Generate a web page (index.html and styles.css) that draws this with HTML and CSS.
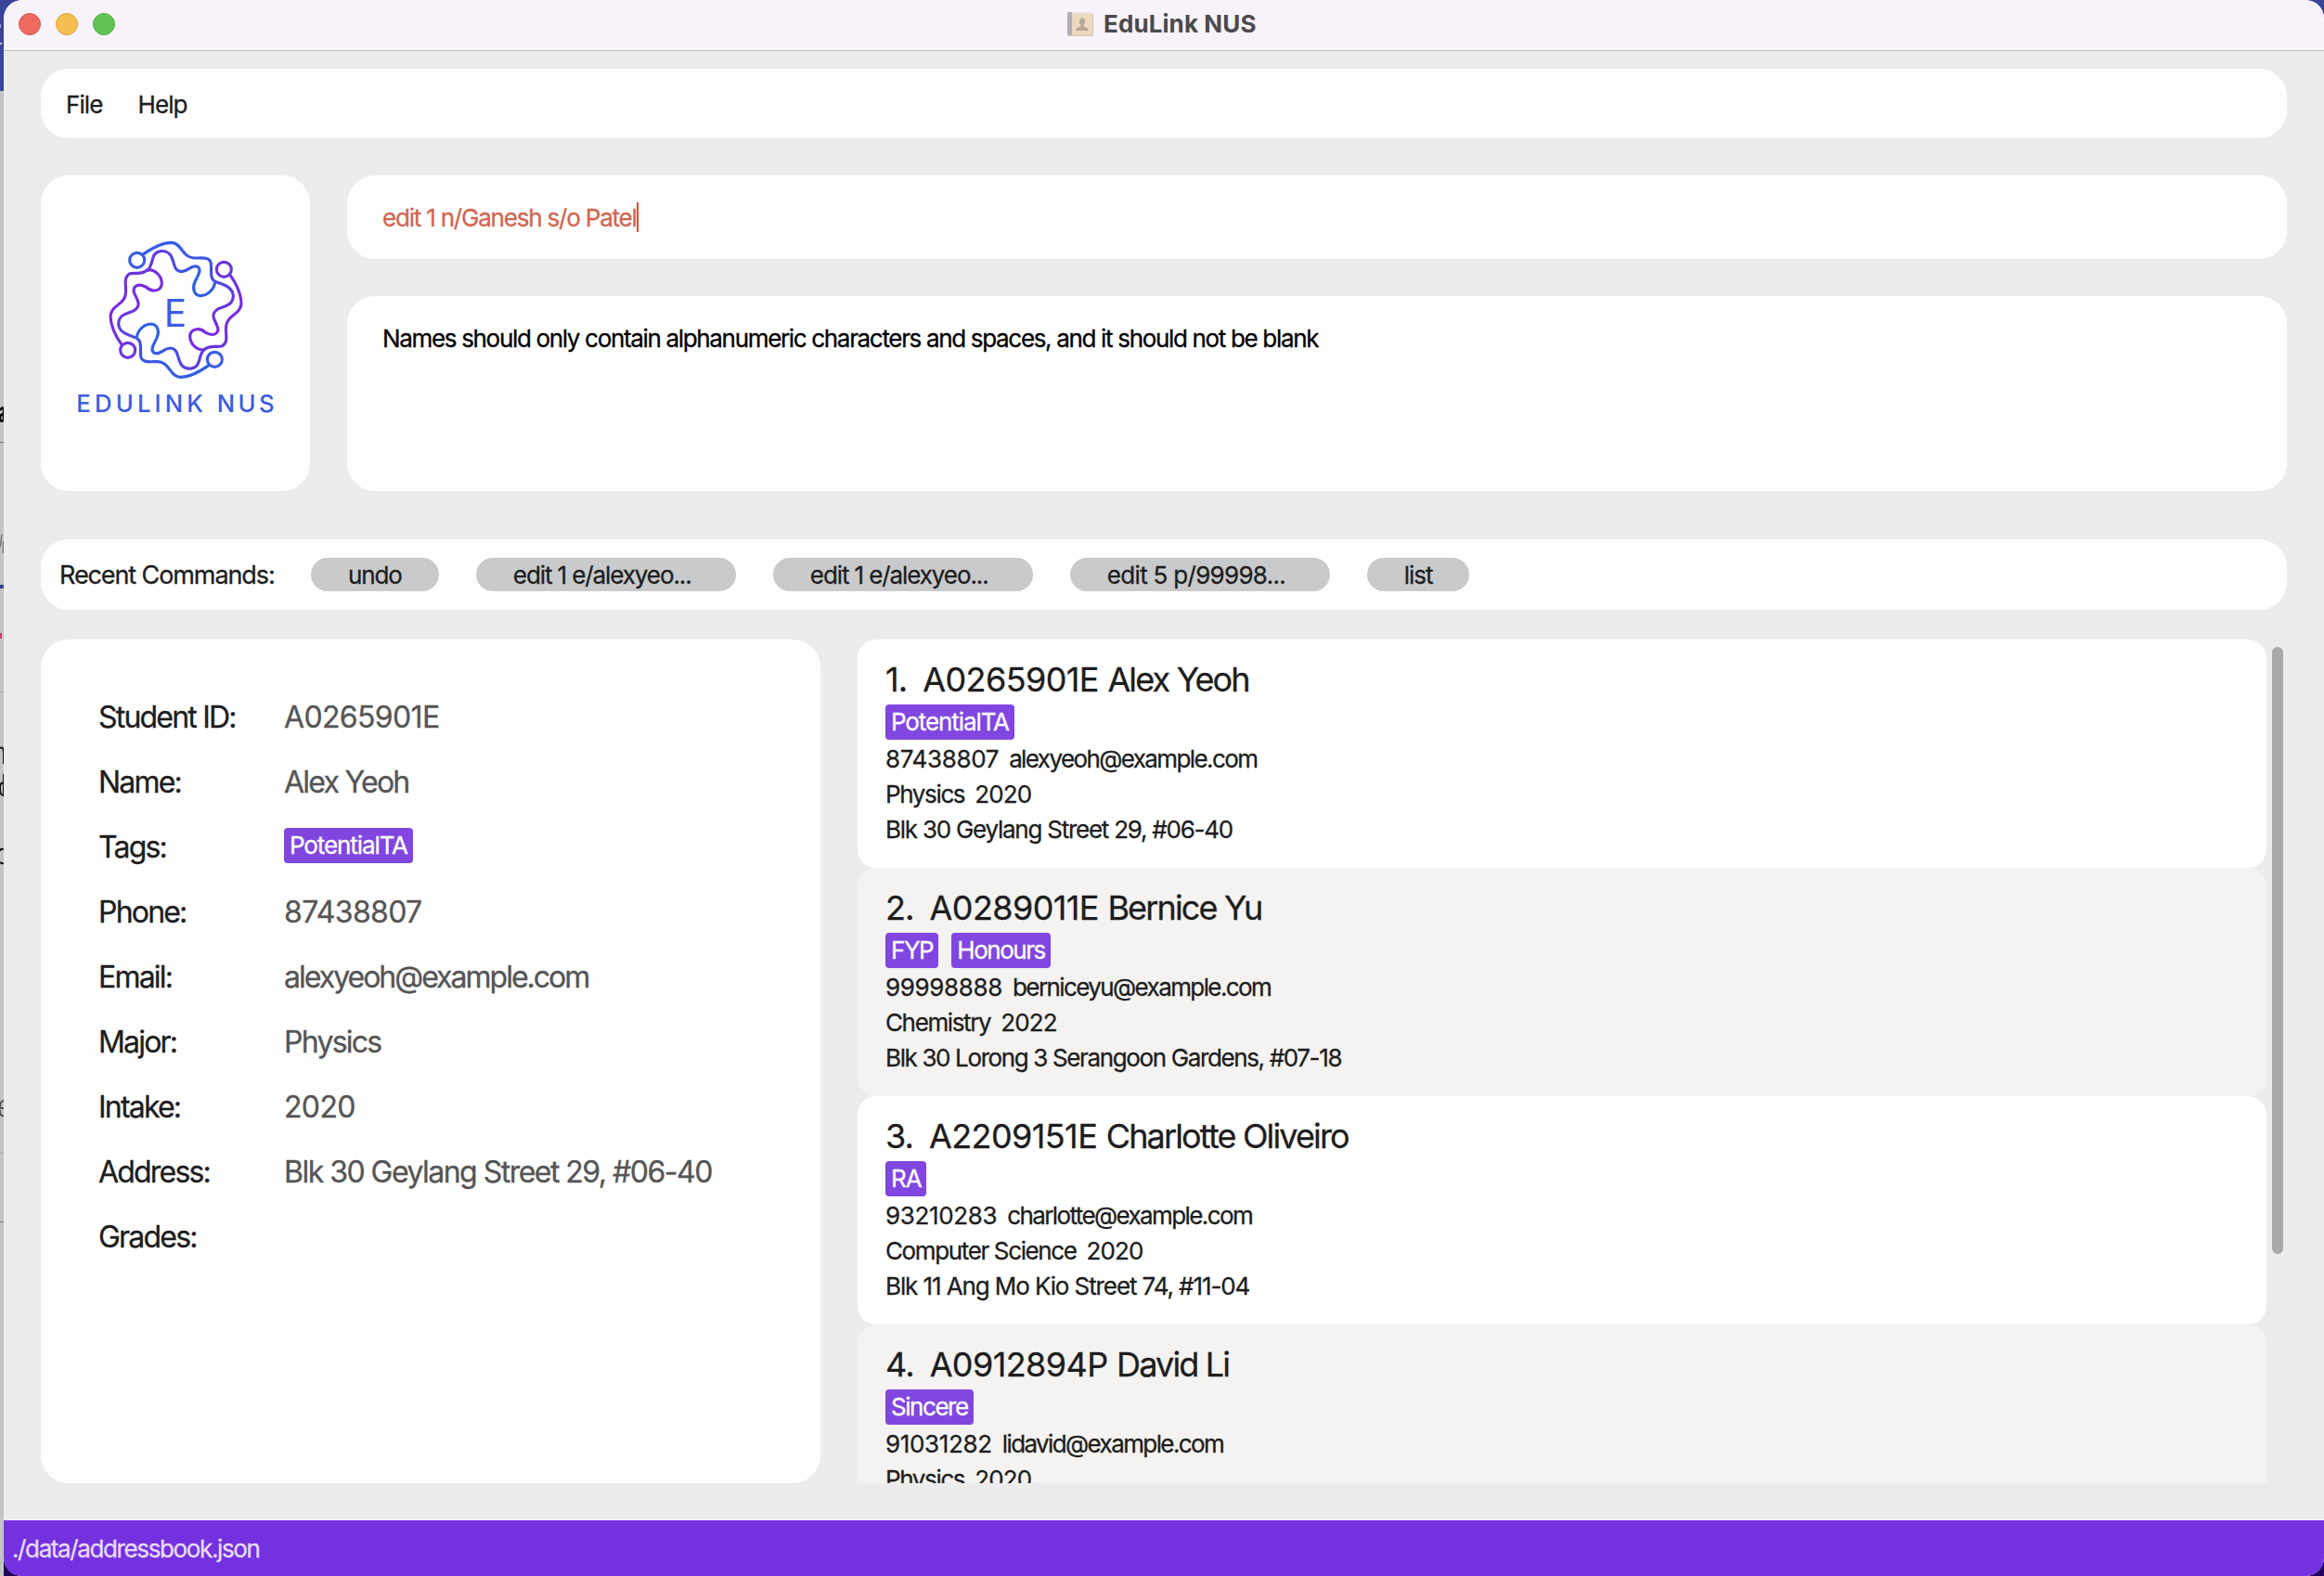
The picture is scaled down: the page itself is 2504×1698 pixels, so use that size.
FILE: index.html
```html
<!DOCTYPE html>
<html lang="en">
<head>
<meta charset="utf-8">
<title>EduLink NUS</title>
<link rel="stylesheet" href="styles.css">
</head>
<body>
<svg class="desktop" width="4" height="1698" viewBox="0 0 4 1698" aria-hidden="true">
  <rect width="4" height="1698" fill="#c4c4c4"/>
  <rect width="4" height="98" fill="#3a4499"/>
  <path d="M0 46h2v2h-2zM0 25l1 3l-1 3" fill="#c8cce8"/>
  <path d="M0 442Q4 436 4 444V454M4 446Q0 446 0 451Q1 456 4 452" fill="none" stroke="#000" stroke-width="2.5"/>
  <path d="M0 476.5h4M0 1316.5h4" stroke="#777"/>
  <path d="M0 745.5h4M0 1242.5h4" stroke="#aaa"/>
  <path d="M0 590l2-14M3.5 583v13" stroke="#777" stroke-width="1.5"/>
  <rect y="630" width="4" height="4" fill="#35408f"/>
  <rect y="682" width="2" height="6" fill="#c9416f"/>
  <path d="M0 806Q4 804 4 811V823M4 834V858M4 844Q0 842 0 850Q0 857 4 857M4 915Q0 914 0 917M0 929Q2 931 4 930" fill="none" stroke="#111" stroke-width="2"/>
  <path d="M4 1186Q0 1186 0 1194H4M0 1196Q0 1203 4 1202" fill="none" stroke="#555" stroke-width="2"/>
</svg>
<div class="window">
  <header class="titlebar">
    <div class="lights"><i class="light red"></i><i class="light amber"></i><i class="light green"></i></div>
    <svg class="book" width="28" height="28" viewBox="0 0 28 28" aria-hidden="true">
      <rect x="1" y="1" width="26" height="25.5" rx="1.5" fill="#ecd9bf"/>
      <rect x="5" y="1" width="22" height="2.5" fill="#ebe4dc"/>
      <rect x="0" y="1" width="5" height="25.5" rx="1" fill="#b5adb2"/>
      <path d="M.5 26.3H27.5V3" fill="none" stroke="#d3c3b0"/>
      <path d="M16 7.500c2 0 3 1.500 3 3.500c0 1.800-.8 3-1.500 4v1.500c1.500.8 5.500 1.300 5.500 4.500h-14c0-3.200 4-3.700 5.500-4.500v-1.500c-.7-1-1.500-2.200-1.500-4c0-2 1-3.500 3-3.500z" fill="#b3a798"/>
    </svg>
    <h1 class="title">EduLink NUS</h1>
  </header>
  <main class="content">
    <nav class="panel menu"><span>File</span><span>Help</span></nav>
    <section class="top">
      <div class="panel logo">
        <svg width="260" height="240" viewBox="0 0 780 720" role="img" aria-label="EduLink NUS">
          <defs>
            <linearGradient id="ga" gradientUnits="userSpaceOnUse" x1="380" y1="110" x2="480" y2="420"><stop offset="0" stop-color="#345de2"/><stop offset=".35" stop-color="#4450df"/><stop offset=".8" stop-color="#752fdf"/><stop offset="1" stop-color="#7c2be0"/></linearGradient>
            <linearGradient id="gb" gradientUnits="userSpaceOnUse" x1="300" y1="160" x2="450" y2="230"><stop offset="0" stop-color="#6538dd"/><stop offset="1" stop-color="#2e61e4"/></linearGradient>
            <linearGradient id="gc" gradientUnits="userSpaceOnUse" x1="560" y1="180" x2="540" y2="440"><stop offset="0" stop-color="#6638dd"/><stop offset=".4" stop-color="#7c2be0"/><stop offset="1" stop-color="#6a35dd"/></linearGradient>
            <g id="half" fill="none" stroke-width="9.500" stroke-linecap="round" stroke-linejoin="round">
              <circle cx="263" cy="151" r="24" stroke="#3a5be1"/>
              <circle cx="544" cy="181" r="24" stroke="#6a36dd"/>
              <path stroke="url(#ga)" d="M281 133C308 114 342 94 375 94C407 95 408 141 446 144C470 145 499 138 502 162C504 190 498 210 515 220C540 230 572 236 574 266C573 300 542 299 524 309C498 326 514 345 521 361C532 384 516 400 486 386C464 365 434 373 434 399C436 424 456 441 478 441"/>
              <path stroke="url(#gb)" d="M515 222C512 246 491 265 469 266C446 265 442 241 449 224C455 206 475 184 459 172C437 164 431 187 406 188C377 185 386 153 370 133C355 117 323 116 315 142C310 157 309 172 297 184"/>
              <path stroke="url(#gc)" d="M563 198C582 224 599 260 600 291C597 327 559 326 552 358C545 384 562 412 539 428C521 434 496 423 480 441"/>
            </g>
          </defs>
          <use href="#half"/>
          <use href="#half" transform="rotate(180 388.500 311.500)"/>
          <text class="mark" x="350" y="366" font-size="121">E</text>
          <text class="mark word" x="67" y="643" font-size="77" textLength="410">EDULINK</text>
          <text class="mark word" x="521" y="643" font-size="77" textLength="186">NUS</text>
        </svg>
      </div>
      <div class="io">
        <div class="panel command"><span class="typed">edit 1 n/Ganesh s/o Patel</span><i class="caret"></i></div>
        <div class="panel result">Names should only contain alphanumeric characters and spaces, and it should not be blank</div>
      </div>
    </section>
    <section class="panel recent">
      <span class="recent-label">Recent Commands:</span>
      <span class="pill">undo</span>
      <span class="pill long">edit 1 e/alexyeo...</span>
      <span class="pill long">edit 1 e/alexyeo...</span>
      <span class="pill long digits">edit 5 p/99998...</span>
      <span class="pill">list</span>
    </section>
    <section class="bottom">
      <dl class="panel detail">
        <dt>Student ID:</dt><dd class="digits">A0265901E</dd>
        <dt>Name:</dt><dd>Alex Yeoh</dd>
        <dt>Tags:</dt><dd><span class="tag wide">PotentialTA</span></dd>
        <dt>Phone:</dt><dd class="digits">87438807</dd>
        <dt>Email:</dt><dd class="email">alexyeoh@example.com</dd>
        <dt>Major:</dt><dd>Physics</dd>
        <dt>Intake:</dt><dd class="digits">2020</dd>
        <dt>Address:</dt><dd class="address">Blk 30 Geylang Street 29, #06-40</dd>
        <dt>Grades:</dt><dd></dd>
      </dl>
      <div class="list">
        <article class="card">
          <h2><span class="index">1.</span><span><span class="id">A0265901E </span>Alex Yeoh</span></h2>
          <div class="tags"><span class="tag wide">PotentialTA</span></div>
          <p><span class="digits">87438807</span><span class="email">alexyeoh@example.com</span></p>
          <p><span>Physics</span><span class="year">2020</span></p>
          <p class="address">Blk 30 Geylang Street 29, #06-40</p>
        </article>
        <article class="card alt">
          <h2><span class="index">2.</span><span><span class="id">A0289011E </span>Bernice Yu</span></h2>
          <div class="tags"><span class="tag">FYP</span><span class="tag">Honours</span></div>
          <p><span class="digits">99998888</span><span class="email">berniceyu@example.com</span></p>
          <p><span>Chemistry</span><span class="year">2022</span></p>
          <p>Blk 30 Lorong 3 Serangoon Gardens, #07-18</p>
        </article>
        <article class="card">
          <h2><span class="index">3.</span><span><span class="id">A2209151E </span>Charlotte Oliveiro</span></h2>
          <div class="tags"><span class="tag wide">RA</span></div>
          <p><span class="digits">93210283</span><span class="email">charlotte@example.com</span></p>
          <p><span>Computer Science</span><span class="year">2020</span></p>
          <p class="address wide">Blk 11 Ang Mo Kio Street 74, #11-04</p>
        </article>
        <article class="card alt">
          <h2><span class="index">4.</span><span><span class="id">A0912894P </span>David Li</span></h2>
          <div class="tags"><span class="tag">Sincere</span></div>
          <p><span class="digits">91031282</span><span class="email">lidavid@example.com</span></p>
          <p><span>Physics</span><span class="year">2020</span></p>
        </article>
      </div>
      <div class="scroll"><div class="thumb"></div></div>
    </section>
  </main>
  <footer class="status">./data/addressbook.json</footer>
</div>
</body>
</html>
```
FILE: styles.css
```css
* { box-sizing: border-box; margin: 0; padding: 0; }
body {
  display: flex;
  width: 2504px;
  height: 1698px;
  overflow: hidden;
  background: linear-gradient(#3a4499 0 98px, #c4c4c4 98px 1600px, #22005f 1600px);
  font-family: Inter, "Liberation Sans", sans-serif;
  font-size: 26px;
  letter-spacing: -0.9px;
  -webkit-text-stroke: 0.3px;
  color: #1d1d1d;
  white-space: nowrap;
}
.desktop { flex: none; display: block; }
.window {
  flex: 1;
  display: flex;
  flex-direction: column;
  background: #ececec;
  border-radius: 20px;
  overflow: hidden;
}
.titlebar {
  height: 55px;
  display: flex;
  align-items: center;
  padding: 0 16px 3px;
  background: #f8f3fa;
  border-bottom: 1px solid #c2bfc3;
}
.lights { display: flex; gap: 16px; width: 1130px; }
.light { width: 24px; height: 24px; border-radius: 50%; border: 1px solid; }
.red { background: #ec6a5e; border-color: #d4544a; }
.amber { background: #f5bf4f; border-color: #d8a03d; }
.green { background: #61c554; border-color: #50a73f; }
.book { flex: none; }
.title { margin-left: 11px; font-size: 26px; font-weight: 700; letter-spacing: 0.1px; color: #4b494c; -webkit-text-stroke: 0; }
.content { flex: 1; display: flex; flex-direction: column; padding: 19px 40px 40px; }
.panel { background: #fefefe; border-radius: 30px; }
.menu { height: 75px; display: flex; align-items: center; gap: 38px; padding: 2px 27px 0; }
.top { display: flex; gap: 40px; height: 340px; margin-top: 40px; }
.logo { width: 290px; padding: 41px 16px; }
.logo svg { display: block; }
.mark { fill: #3d5be0; font-family: Inter, sans-serif; letter-spacing: 0; }
.word { font-weight: 500; }
.io { flex: 1; display: flex; flex-direction: column; gap: 40px; }
.command { height: 90px; display: flex; align-items: center; padding: 0 38px; color: #d06651; letter-spacing: -1.2px; }
.caret { width: 2px; height: 32px; background: #c8553d; }
.result { flex: 1; padding: 30px 38px; line-height: 32px; color: #000; letter-spacing: -1.33px; }
.recent { height: 76px; margin-top: 52px; display: flex; align-items: center; gap: 40px; padding: 0 20px; }
.recent-label { font-size: 27px; letter-spacing: -1.1px; width: 231px; }
.pill { height: 36px; line-height: 38px; border-radius: 18px; background: #c9cacc; padding: 0 40px; letter-spacing: -1.1px; }
.long { width: 280px; }
.long.digits { letter-spacing: -0.7px; }
.bottom { display: flex; height: 909px; margin-top: 32px; }
.detail {
  width: 840px;
  margin-right: 40px;
  padding: 48px 62px;
  display: grid;
  grid-template-columns: 200px 1fr;
  grid-auto-rows: 70px;
  align-content: start;
  align-items: center;
  font-size: 32px;
}
dt { letter-spacing: -1.8px; }
dd { color: #555; letter-spacing: -1.75px; }
dd.digits { letter-spacing: -0.65px; }
dd.email { letter-spacing: -2px; }
dd.address { letter-spacing: -1.52px; }
dd .tag { width: fit-content; margin-bottom: 3px; }
.tag {
  display: block;
  height: 38px;
  line-height: 38px;
  padding: 0 6px;
  border-radius: 4px;
  background: #8146e0;
  color: #fff;
  font-size: 26px;
  letter-spacing: -1.45px;
}
.tag.wide { letter-spacing: -1.1px; }
.list { width: 1518px; overflow: hidden; }
.card { height: 246px; padding: 20px 30px; border-radius: 20px; background: #fff; }
.alt { background: #f4f3f1; }
h2 { display: flex; gap: 17px; font-size: 36px; font-weight: 400; line-height: 46px; height: 50px; letter-spacing: -1.85px; }
.index { letter-spacing: -0.9px; }
.id { letter-spacing: -0.6px; }
.tags { display: flex; gap: 14px; height: 40px; }
p { display: flex; gap: 11px; font-size: 26px; line-height: 38px; letter-spacing: -1.37px; }
p .digits { letter-spacing: -0.35px; }
p .email { letter-spacing: -1.6px; }
p .year { letter-spacing: -0.9px; }
p.address { letter-spacing: -1.25px; }
p.address.wide { letter-spacing: -1.1px; }
.scroll { margin-left: 6px; padding-top: 8px; }
.thumb { width: 12px; height: 654px; border-radius: 6px; background: #a9a9a9; }
.status { height: 60px; padding: 0 9px; line-height: 62px; background: #7331df; color: #e9dcfa; letter-spacing: -1.38px; }
```
